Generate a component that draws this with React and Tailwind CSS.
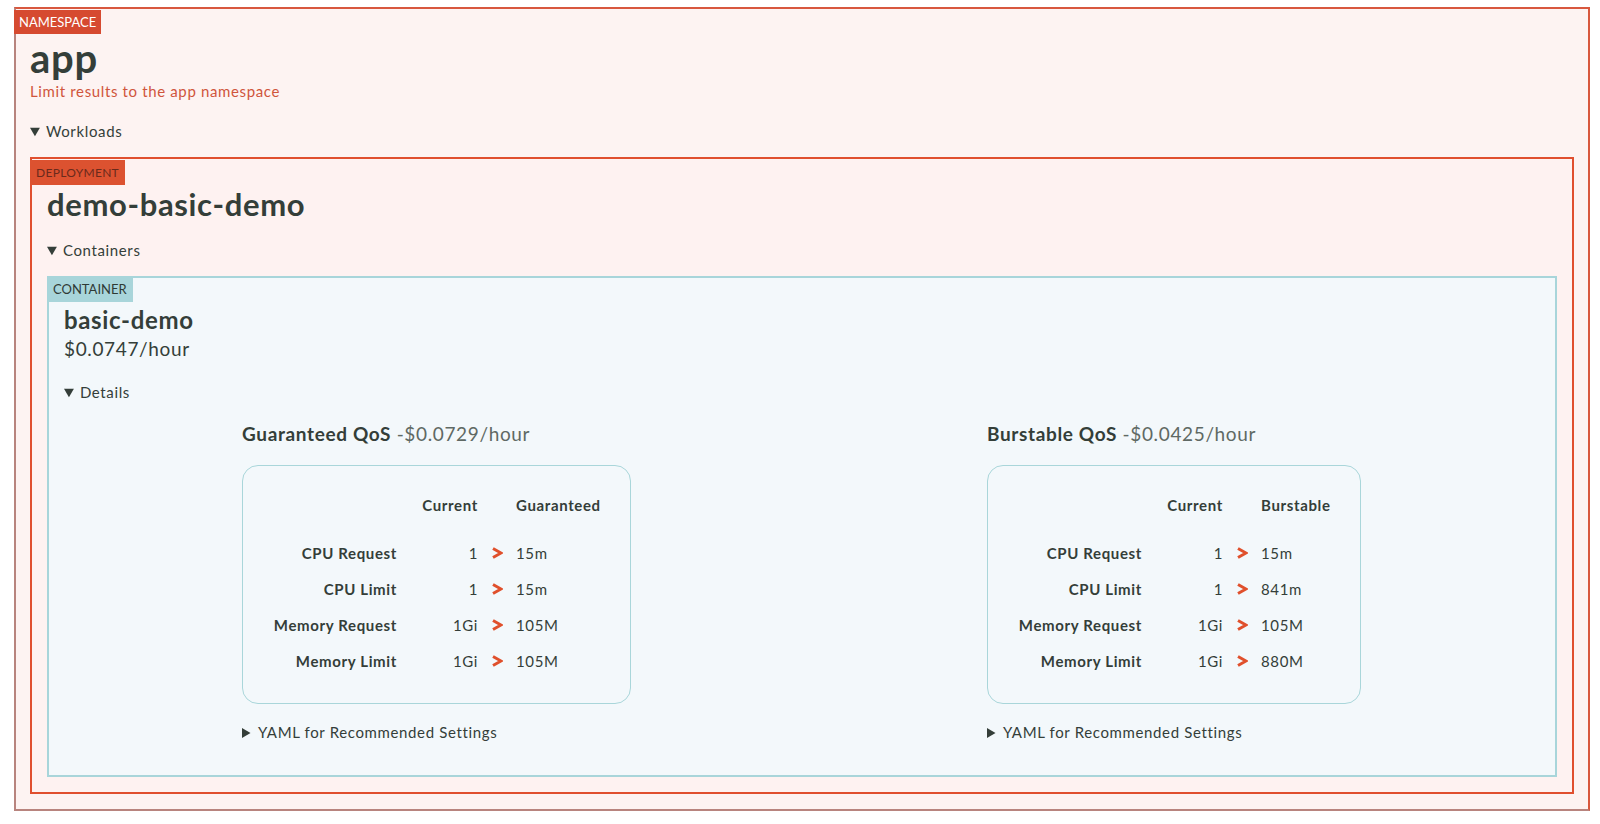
import React from 'react';

const qos = [
  {
    title: 'Guaranteed QoS',
    cost: '-$0.0729/hour',
    target: 'Guaranteed',
    rows: [
      ['CPU Request', '1', '15m'],
      ['CPU Limit', '1', '15m'],
      ['Memory Request', '1Gi', '105M'],
      ['Memory Limit', '1Gi', '105M'],
    ],
  },
  {
    title: 'Burstable QoS',
    cost: '-$0.0425/hour',
    target: 'Burstable',
    rows: [
      ['CPU Request', '1', '15m'],
      ['CPU Limit', '1', '841m'],
      ['Memory Request', '1Gi', '105M'],
      ['Memory Limit', '1Gi', '880M'],
    ],
  },
];

function Arrow() {
  return (
    <svg width="12" height="12" viewBox="0 0 12 12" className="mx-auto">
      <path d="M2 1.5 L10 6 L2 10.5" fill="none" stroke="#e0502c" strokeWidth="3" strokeLinejoin="miter" />
    </svg>
  );
}

function QosBlock({ q }) {
  return (
    <div>
      <div className="text-[19px] leading-[26px]">
        <span className="font-bold">{q.title}</span>{' '}
        <span className="text-[#5f6964]">{q.cost}</span>
      </div>
      <div className="mt-[18px] inline-block border border-[#a9d6da] rounded-[16px] pl-[29px] pr-[29px] pt-[27px] pb-[24px]">
        <div className="grid grid-cols-[125px_81px_38px_auto] text-[15px] leading-[24px] font-bold">
          <div></div>
          <div className="text-right">Current</div>
          <div></div>
          <div>{q.target}</div>
        </div>
        <div className="mt-[18px]">
          {q.rows.map(([label, cur, next]) => (
            <div key={label} className="grid grid-cols-[125px_81px_38px_auto] items-center h-[36px] text-[15px]">
              <div className="text-right font-bold">{label}</div>
              <div className="text-right">{cur}</div>
              <Arrow />
              <div>{next}</div>
            </div>
          ))}
        </div>
      </div>
      <details className="mt-[18px] text-[15px] leading-[20px]">
        <summary className="cursor-pointer">YAML for Recommended Settings</summary>
      </details>
    </div>
  );
}

export default function App() {
  return (
    <div className="min-h-screen bg-white pt-[7px] pl-[14px] pr-[10px] text-[#343e39] tracking-[0.04em] font-['Lato',sans-serif]">
      <section className="border-2 border-t-[#d8583e] border-r-[#d8583e] border-l-[#b8847e] border-b-[#b8847e] bg-[#fdf3f2] pb-[15px]">
        <div className="-ml-[2px] -mt-[2px] inline-block bg-[#d64a30] text-white text-[13px] leading-[24px] px-[5px] uppercase tracking-normal">Namespace</div>
        <div className="px-[14px]">
          <h1 className="mt-[2px] text-[40px] leading-[44px] font-bold tracking-[0.02em]">app</h1>
          <div className="mt-[1px] text-[15px] leading-[20px] text-[#d0553c]">Limit results to the app namespace</div>
          <details open className="mt-[20px] text-[15px] leading-[20px]">
            <summary className="cursor-pointer">Workloads</summary>
            <section className="mt-[16px] border-2 border-[#e04f2f] bg-[#fef2f1] pb-[15px] text-[16px] leading-normal">
              <div className="-ml-[2px] -mt-[2px] inline-block bg-[#dc5230] text-[#6a2a1c] text-[12px] leading-[25px] px-[6px] uppercase tracking-wide">Deployment</div>
              <div className="px-[15px]">
                <h2 className="text-[31px] leading-[38px] font-bold">demo-basic-demo</h2>
                <details open className="mt-[17px] text-[15px] leading-[20px]">
                  <summary className="cursor-pointer">Containers</summary>
                  <section className="mt-[16px] border-2 border-[#a8d5da] bg-[#f3f8fb] pb-[33px]">
                    <div className="-ml-[2px] -mt-[2px] inline-block bg-[#a8d5da] text-[#2f3a35] text-[13px] leading-[25px] px-[6px] uppercase tracking-normal">Container</div>
                    <div className="px-[15px]">
                      <h3 className="mt-[3px] text-[24px] leading-[30px] font-bold">basic-demo</h3>
                      <div className="mt-[2px] text-[19px] leading-[24px]">$0.0747/hour</div>
                      <details open className="mt-[21px] text-[15px] leading-[20px]">
                        <summary className="cursor-pointer">Details</summary>
                        <div className="mt-[19px] ml-[178px] grid grid-cols-[745px_auto]">
                          {qos.map((q) => (
                            <QosBlock key={q.title} q={q} />
                          ))}
                        </div>
                      </details>
                    </div>
                  </section>
                </details>
              </div>
            </section>
          </details>
        </div>
      </section>
    </div>
  );
}
